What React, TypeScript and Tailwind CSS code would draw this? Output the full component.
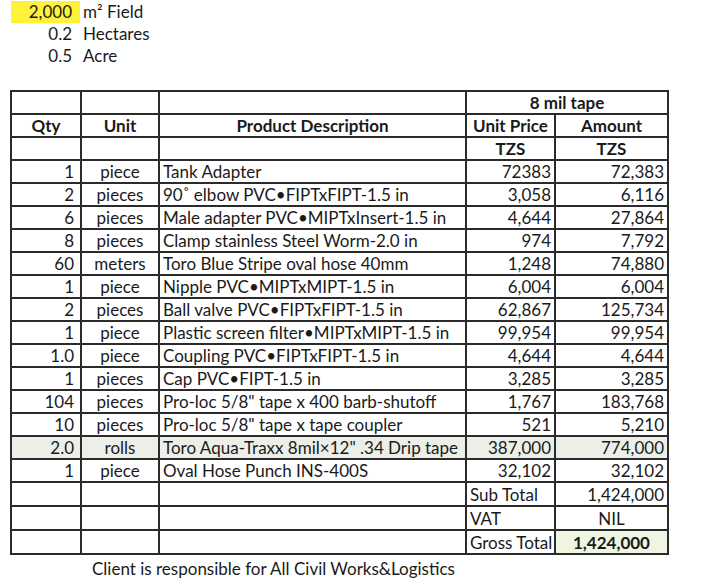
const rows = [
  { qty: "1", unit: "piece", desc: "Tank Adapter", price: "72383", amount: "72,383" },
  { qty: "2", unit: "pieces", desc: "90˚ elbow PVC•FIPTxFIPT-1.5 in", price: "3,058", amount: "6,116" },
  { qty: "6", unit: "pieces", desc: "Male adapter PVC•MIPTxInsert-1.5 in", price: "4,644", amount: "27,864" },
  { qty: "8", unit: "pieces", desc: "Clamp stainless Steel Worm-2.0 in", price: "974", amount: "7,792" },
  { qty: "60", unit: "meters", desc: "Toro Blue Stripe oval hose 40mm", price: "1,248", amount: "74,880" },
  { qty: "1", unit: "piece", desc: "Nipple PVC•MIPTxMIPT-1.5 in", price: "6,004", amount: "6,004" },
  { qty: "2", unit: "pieces", desc: "Ball valve PVC•FIPTxFIPT-1.5 in", price: "62,867", amount: "125,734" },
  { qty: "1", unit: "piece", desc: "Plastic screen filter•MIPTxMIPT-1.5 in", price: "99,954", amount: "99,954" },
  { qty: "1.0", unit: "piece", desc: "Coupling PVC•FIPTxFIPT-1.5 in", price: "4,644", amount: "4,644" },
  { qty: "1", unit: "pieces", desc: "Cap PVC•FIPT-1.5 in", price: "3,285", amount: "3,285" },
  { qty: "104", unit: "pieces", desc: "Pro-loc 5/8\" tape x 400 barb-shutoff", price: "1,767", amount: "183,768" },
  { qty: "10", unit: "pieces", desc: "Pro-loc 5/8\" tape x tape coupler", price: "521", amount: "5,210" },
  { qty: "2.0", unit: "rolls", desc: "Toro Aqua-Traxx 8mil×12\" .34 Drip tape", price: "387,000", amount: "774,000", shade: true },
  { qty: "1", unit: "piece", desc: "Oval Hose Punch INS-400S", price: "32,102", amount: "32,102" },
];

const totals = [
  { label: "Sub Total", value: "1,424,000" },
  { label: "VAT", value: "NIL" },
  { label: "Gross Total", value: "1,424,000" },
];

const cell = "border-2 border-[#2b2b2b] px-[3px] h-[23px] leading-none whitespace-nowrap";

export default function App() {
  return (
    <div className="w-[720px] h-[580px] bg-white text-[#1a1a1a] text-[17px] font-['Lato','Open_Sans',sans-serif] overflow-hidden">
      <div className="pt-[1px]">
        <div className="flex h-[22px] items-center">
          <div className="ml-[11px] w-[69px] h-full bg-[#fff23a] text-right pr-[8px] leading-[22px]">2,000</div>
          <div className="ml-[3px]">m² Field</div>
        </div>
        <div className="flex h-[22px] items-center">
          <div className="w-[72px] text-right">0.2</div>
          <div className="ml-[11px]">Hectares</div>
        </div>
        <div className="flex h-[22px] items-center">
          <div className="w-[72px] text-right">0.5</div>
          <div className="ml-[11px]">Acre</div>
        </div>
      </div>

      <table className="ml-[10px] mt-[23px] border-collapse table-fixed w-[657px]">
        <colgroup>
          <col className="w-[70px]" />
          <col className="w-[78px]" />
          <col className="w-[307px]" />
          <col className="w-[89px]" />
          <col className="w-[113px]" />
        </colgroup>
        <tbody>
          <tr>
            <td className={cell} />
            <td className={cell} />
            <td className={cell} />
            <td colSpan={2} className={`${cell} text-center font-bold`}>8 mil tape</td>
          </tr>
          <tr className="font-bold">
            <td className={`${cell} text-center`}>Qty</td>
            <td className={`${cell} text-center`}>Unit</td>
            <td className={`${cell} text-center`}>Product Description</td>
            <td className={`${cell} text-center`}>Unit Price</td>
            <td className={`${cell} text-center`}>Amount</td>
          </tr>
          <tr className="font-bold">
            <td className={cell} />
            <td className={cell} />
            <td className={cell} />
            <td className={`${cell} text-center`}>TZS</td>
            <td className={`${cell} text-center`}>TZS</td>
          </tr>
          {rows.map((r, i) => (
            <tr key={i} className={r.shade ? "bg-[#eceee8]" : ""}>
              <td className={`${cell} text-right pr-[6px]`}>{r.qty}</td>
              <td className={`${cell} text-center`}>{r.unit}</td>
              <td className={`${cell} text-left`}>{r.desc}</td>
              <td className={`${cell} text-right`}>{r.price}</td>
              <td className={`${cell} text-right`}>{r.amount}</td>
            </tr>
          ))}
          {totals.map((t, i) => (
            <tr key={t.label}>
              <td className={`${cell} h-[24px]`} />
              <td className={`${cell} h-[24px]`} />
              <td className={`${cell} h-[24px]`} />
              <td className={`${cell} h-[24px] text-left px-[2px]`}>{t.label}</td>
              <td
                className={`${cell} h-[24px] ${
                  i === 0 ? "text-right" : i === 1 ? "text-center" : "text-center font-bold bg-[#eef5e2]"
                }`}
              >
                {t.value}
              </td>
            </tr>
          ))}
        </tbody>
      </table>

      <p className="ml-[92px] mt-[1px]">Client is responsible for All Civil Works&amp;Logistics</p>
    </div>
  );
}
